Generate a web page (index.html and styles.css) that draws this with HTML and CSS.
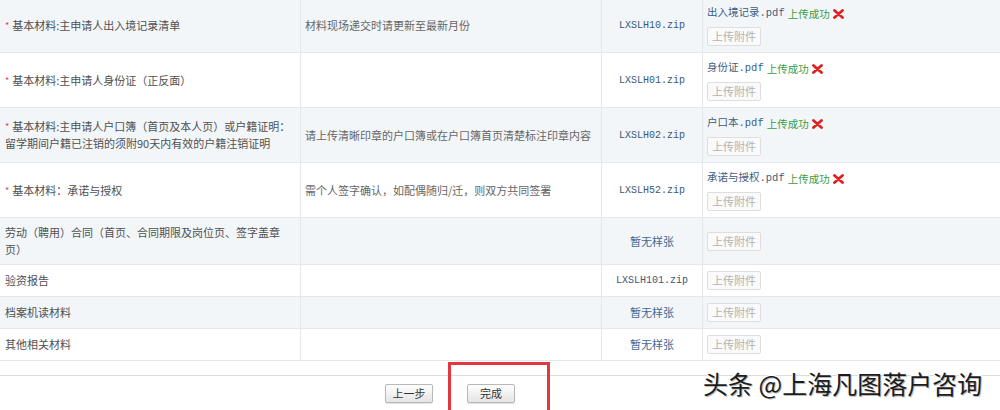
FILE: index.html
```html
<!DOCTYPE html>
<html lang="zh-CN">
<head>
    <meta charset="UTF-8">
    <title>上传材料</title>
    <link rel="stylesheet" href="styles.css">
</head>
<body>
    <div class="sheet">
        <table class="materials">
            <colgroup>
                <col class="c-name">
                <col class="c-note">
                <col class="c-sample">
                <col class="c-file">
            </colgroup>
            <tr class="odd">
                <td class="name"><span class="req">*</span>基本材料:主申请人出入境记录清单</td>
                <td class="note">材料现场递交时请更新至最新月份</td>
                <td class="sample">LXSLH10.zip</td>
                <td class="file">
                    <div class="status"><span class="fname">出入境记录.pdf</span> <span class="ok">上传成功</span> <svg class="del" width="11" height="10" viewBox="0 0 11 10"><path d="M1.5 1.5 L9.5 8.5 M9.5 1.5 L1.5 8.5" stroke="#e0201e" stroke-width="2.8" stroke-linecap="round"/></svg></div>
                    <span class="upload">上传附件</span>
                </td>
            </tr>
            <tr>
                <td class="name"><span class="req">*</span>基本材料:主申请人身份证（正反面）</td>
                <td class="note"></td>
                <td class="sample">LXSLH01.zip</td>
                <td class="file">
                    <div class="status"><span class="fname">身份证.pdf</span> <span class="ok">上传成功</span> <svg class="del" width="11" height="10" viewBox="0 0 11 10"><path d="M1.5 1.5 L9.5 8.5 M9.5 1.5 L1.5 8.5" stroke="#e0201e" stroke-width="2.8" stroke-linecap="round"/></svg></div>
                    <span class="upload">上传附件</span>
                </td>
            </tr>
            <tr class="odd">
                <td class="name"><span class="req">*</span>基本材料:主申请人户口簿（首页及本人页）或户籍证明：<br>留学期间户籍已注销的须附90天内有效的户籍注销证明</td>
                <td class="note">请上传清晰印章的户口簿或在户口簿首页清楚标注印章内容</td>
                <td class="sample">LXSLH02.zip</td>
                <td class="file">
                    <div class="status"><span class="fname">户口本.pdf</span> <span class="ok">上传成功</span> <svg class="del" width="11" height="10" viewBox="0 0 11 10"><path d="M1.5 1.5 L9.5 8.5 M9.5 1.5 L1.5 8.5" stroke="#e0201e" stroke-width="2.8" stroke-linecap="round"/></svg></div>
                    <span class="upload">上传附件</span>
                </td>
            </tr>
            <tr>
                <td class="name"><span class="req">*</span>基本材料：承诺与授权</td>
                <td class="note">需个人签字确认，如配偶随归/迁，则双方共同签署</td>
                <td class="sample">LXSLH52.zip</td>
                <td class="file">
                    <div class="status"><span class="fname">承诺与授权.pdf</span> <span class="ok">上传成功</span> <svg class="del" width="11" height="10" viewBox="0 0 11 10"><path d="M1.5 1.5 L9.5 8.5 M9.5 1.5 L1.5 8.5" stroke="#e0201e" stroke-width="2.8" stroke-linecap="round"/></svg></div>
                    <span class="upload">上传附件</span>
                </td>
            </tr>
            <tr class="odd">
                <td class="name">劳动（聘用）合同（首页、合同期限及岗位页、签字盖章<br>页）</td>
                <td class="note"></td>
                <td class="sample none">暂无样张</td>
                <td class="file"><span class="upload">上传附件</span></td>
            </tr>
            <tr>
                <td class="name">验资报告</td>
                <td class="note"></td>
                <td class="sample">LXSLH101.zip</td>
                <td class="file"><span class="upload">上传附件</span></td>
            </tr>
            <tr class="odd">
                <td class="name">档案机读材料</td>
                <td class="note"></td>
                <td class="sample none">暂无样张</td>
                <td class="file"><span class="upload">上传附件</span></td>
            </tr>
            <tr>
                <td class="name">其他相关材料</td>
                <td class="note"></td>
                <td class="sample none">暂无样张</td>
                <td class="file"><span class="upload">上传附件</span></td>
            </tr>
        </table>

        <div class="actions">
            <button class="btn">上一步</button>
            <button class="btn">完成</button>
        </div>
    </div>

    <!-- annotation + watermark lie over the page -->
    <div class="mark-box"></div>
    <div class="watermark">头条 @上海凡图落户咨询</div>
</body>
</html>
```

FILE: styles.css
```css
html, body {
    margin: 0;
    padding: 0;
}

body {
    width: 1000px;
    height: 410px;
    overflow: hidden;
    position: relative;
    background: #fff;
    font-family: "Noto Sans CJK SC", "DejaVu Sans", sans-serif;
    font-size: 11px;
    color: #555;
}

.sheet {
    margin-top: -2px;
}

.materials {
    border-collapse: separate;
    border-spacing: 0;
    table-layout: fixed;
    width: 1012px;
}

.c-name { width: 301px; }
.c-note { width: 301px; }
.c-sample { width: 101px; }
.c-file { width: 309px; }

.materials td {
    border-right: 1px solid #e4e8eb;
    border-bottom: 1px solid #e4e8eb;
    padding: 6px 5px;
    line-height: 17px;
    vertical-align: middle;
}

.materials tr.odd td {
    background: #f2f6f9;
}

.name {
    color: #505050;
}

.req {
    color: #e0484a;
    font-size: 9px;
    margin-right: 3px;
    vertical-align: 1px;
}

.note {
    color: #666;
    padding-left: 4px !important;
}

.sample {
    text-align: center;
    font-family: "Liberation Mono", "Noto Sans CJK SC", monospace;
    font-size: 10px;
    color: #3d5876;
}

.sample.none {
    font-family: "Noto Sans CJK SC", sans-serif;
    font-size: 11px;
    color: #3f6896;
}

.materials td.file {
    padding: 6px 4px;
}

.status {
    display: flex;
    align-items: center;
    gap: 3px;
    height: 19px;
    margin-bottom: 4px;
    font-size: 10.5px;
    white-space: nowrap;
    overflow: hidden;
}

.fname {
    font-family: "Liberation Mono", "Noto Sans CJK SC", monospace;
    color: #3e5c80;
}

.ok {
    color: #3a9b3e;
}

.upload {
    display: block;
    box-sizing: border-box;
    width: 54px;
    height: 19px;
    line-height: 17px;
    border: 1px solid #dedede;
    border-radius: 2px;
    background: #fafafa;
    color: #b3b3b3;
    text-align: center;
}

.actions {
    margin-top: 14px;
    border-top: 1px solid #dcdcdc;
    padding: 8px 0 0 385px;
    display: flex;
    gap: 34px;
}

.btn {
    box-sizing: border-box;
    width: 48px;
    height: 19px;
    padding: 0;
    border: 1px solid #b8b8b8;
    border-radius: 2px;
    background: linear-gradient(#ffffff, #e4e4e4);
    box-shadow: 0 1px 1px rgba(0, 0, 0, 0.12);
    font-family: "Noto Sans CJK SC", sans-serif;
    font-size: 11px;
    color: #333;
    line-height: 17px;
}

.mark-box {
    position: absolute;
    left: 448px;
    top: 362px;
    width: 96px;
    height: 60px;
    border: 3px solid #e0383e;
}

.watermark {
    position: absolute;
    left: 703px;
    top: 366px;
    font-family: "Noto Sans CJK SC", sans-serif;
    font-size: 25px;
    line-height: 34px;
    color: #1c1c1c;
    text-shadow: 1px 1px 0 #bdbdbd, -1px -1px 0 #fff, 1px -1px 0 #fff, -1px 1px 0 #fff;
}
```
